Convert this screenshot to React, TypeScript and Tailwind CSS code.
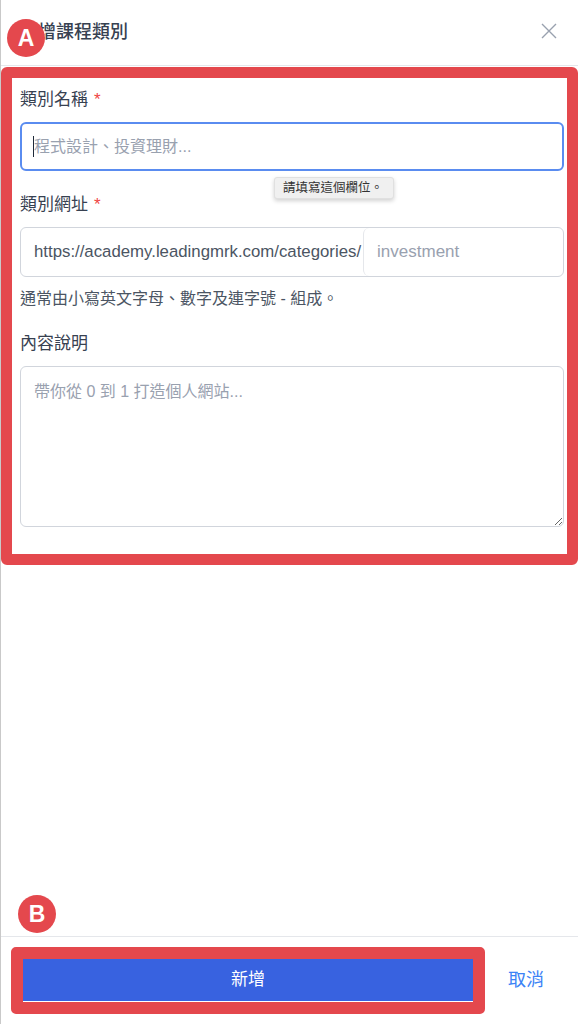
import React from 'react';

const FONT = { fontFamily: '"Liberation Sans", "Noto Sans CJK TC", sans-serif' };

const Label = ({ text, required }: { text: string; required?: boolean }) => (
  <div className="text-[17px] leading-6 text-[#374151] mb-[10px]">
    {text}
    {required && <span className="ml-1.5 text-[#ef4444]">*</span>}
  </div>
);

export default function App() {
  return (
    <div
      className="relative w-full h-[1024px] flex flex-col bg-white border-l border-[#c9c9c9] overflow-hidden"
      style={FONT}
    >
      {/* Header */}
      <div className="h-[66px] shrink-0 border-b border-gray-200 pl-[19px] pr-[21px] flex items-center justify-between">
        <h2 className="text-lg font-medium text-[#374151] -mt-[2px]">新增課程類別</h2>
        <button className="w-4 h-4 -mt-[4px] text-gray-400">
          <svg viewBox="0 0 16 16" className="w-4 h-4" fill="none" stroke="currentColor" strokeWidth="1.4">
            <path d="M1 1L15 15M15 1L1 15" />
          </svg>
        </button>
      </div>

      {/* Form */}
      <div className="px-[19px] pt-[22px] pr-[14px]">
        <Label text="類別名稱" required />
        <div className="relative">
          <input
            className="w-full h-[49px] border-2 border-[#5a8cf0] rounded-md pl-[12px] text-base text-gray-800 placeholder:text-gray-400 outline-none"
            placeholder="程式設計、投資理財..."
          />
          <span className="absolute left-[13px] top-[14px] w-px h-[21px] bg-gray-800" />
        </div>

        <div className="mt-[22px]">
          <Label text="類別網址" required />
          <div className="flex h-[50px] border border-gray-300 rounded-md">
            <span className="flex items-center pl-[13px] pr-[2px] text-[16.8px] text-[#4b5563] whitespace-nowrap">
              https://academy.leadingmrk.com/categories/
            </span>
            <input
              className="flex-1 min-w-0 border-l border-gray-200 rounded-md pl-[13px] text-[17px] text-gray-800 placeholder:text-gray-400 outline-none"
              placeholder="investment"
            />
          </div>
          <p className="mt-[11px] text-base leading-[22px] text-[#4b5563]">
            通常由小寫英文字母、數字及連字號 - 組成。
          </p>
        </div>

        <div className="mt-[22px]">
          <Label text="內容說明" />
          <textarea
            className="block w-full h-[161px] border border-gray-300 rounded-md px-[13px] pt-[13px] text-base leading-6 text-gray-800 placeholder:text-gray-400 outline-none"
            placeholder="帶你從 0 到 1 打造個人網站..."
          />
        </div>
      </div>

      {/* Footer */}
      <div className="mt-auto h-[88px] shrink-0 border-t border-gray-200 pl-[22px] pr-[34px] pt-[21px] flex items-start gap-[35px]">
        <button className="flex-1 h-[43px] bg-[#3862e0] text-white text-[17px] flex items-center justify-center">
          新增
        </button>
        <button className="h-[43px] w-9 text-lg text-[#3b82f6] flex items-center justify-center whitespace-nowrap">
          取消
        </button>
      </div>

      {/* Validation tooltip */}
      <div className="absolute left-[273px] top-[177px] w-[120px] h-[22px] bg-[#f0f0f0] border border-[#e0e0e0] rounded-[3px] shadow-[0_2px_4px_rgba(0,0,0,0.18)] flex items-center pl-[8px] text-[12.5px] text-[#333]">
        請填寫這個欄位。
      </div>

      {/* Annotation A */}
      <div className="absolute left-0 top-[67px] w-[577px] h-[498px] border-[11px] border-[#e4484d] rounded-[6px] pointer-events-none" />
      <div className="absolute left-[6px] top-[19px] w-[38px] h-[38px] rounded-full bg-[#e4484d] text-white text-[23px] font-bold flex items-center justify-center">
        A
      </div>

      {/* Annotation B */}
      <div className="absolute left-[10px] top-[947px] w-[474px] h-[67px] border-[12px] border-[#e4484d] rounded-[5px] pointer-events-none" />
      <div className="absolute left-[17px] top-[895px] w-[38px] h-[38px] rounded-full bg-[#e4484d] text-white text-[23px] font-bold flex items-center justify-center">
        B
      </div>
    </div>
  );
}
